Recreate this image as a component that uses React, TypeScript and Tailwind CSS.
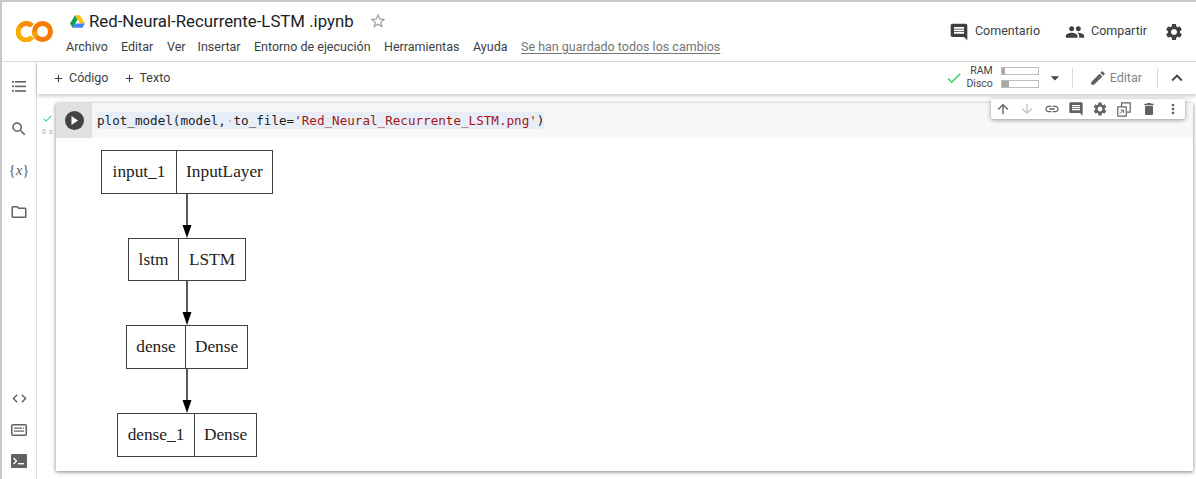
import React from "react";
import {
  MdComment, MdPeople, MdSettings, MdEdit, MdExpandLess, MdCheck, MdArrowUpward, MdArrowDownward,
  MdLink, MdDelete, MdMoreVert, MdSearch, MdCode, MdStarBorder, MdAdd, MdArrowDropDown, MdOutlineFolder,
} from "react-icons/md";

function ColabLogo() {
  return (
    <svg width="37" height="21" viewBox="0 0 37 21" fill="none" strokeWidth="5">
      <circle cx="26.5" cy="10.5" r="8" stroke="#F57C00" />
      <path d="M18.5 10.5 A8 8 0 0 0 20.8 16.2" stroke="#F9A000" />
      <path d="M16.2 16.2 A8 8 0 0 1 3.8 6.1" stroke="#F9AB00" />
      <path d="M3.8 6.1 A8 8 0 0 1 16.2 4.8" stroke="#F78C00" />
    </svg>
  );
}

function DriveLogo() {
  return (
    <svg width="15" height="13" viewBox="0 0 15 13">
      <path d="M5 0.2 H10 L15 8.6 H10 Z" fill="#FFC107" />
      <path d="M5 0.2 L7.5 4.4 L2.6 12.8 L0 8.6 Z" fill="#0F9D58" />
      <path d="M5 8.6 H15 L12.5 12.8 H2.6 Z" fill="#4285F4" />
    </svg>
  );
}

function ListIcon() {
  return (
    <svg width="14" height="11" viewBox="0 0 14 11" fill="#616161">
      <rect x="0" y="0" width="2" height="1.6" /><rect x="3" y="0" width="11" height="1.6" />
      <rect x="0" y="4.6" width="2" height="1.6" /><rect x="3" y="4.6" width="11" height="1.6" />
      <rect x="0" y="9.2" width="2" height="1.6" /><rect x="3" y="9.2" width="11" height="1.6" />
    </svg>
  );
}

function VarIcon() {
  return (
    <span className="text-[15px] text-[#616161] font-['Liberation_Serif',serif]">
      {"{"}<span className="italic">x</span>{"}"}
    </span>
  );
}

function SnippetIcon() {
  return (
    <svg width="16" height="12" viewBox="0 0 16 12" fill="none">
      <rect x="0.75" y="0.75" width="14.5" height="10.5" rx="1" stroke="#616161" strokeWidth="1.5" />
      <rect x="3" y="3.5" width="8" height="1.2" fill="#616161" />
      <rect x="12" y="3.5" width="1.2" height="1.2" fill="#616161" />
      <rect x="3" y="6.5" width="10" height="1.2" fill="#616161" />
    </svg>
  );
}

function TerminalIcon() {
  return (
    <svg width="16" height="14" viewBox="0 0 16 14">
      <rect width="16" height="14" rx="1" fill="#616161" />
      <path d="M2.5 4 L5.5 7 L2.5 10" stroke="#fff" strokeWidth="1.4" fill="none" />
      <rect x="7" y="9" width="6" height="1.4" fill="#fff" />
    </svg>
  );
}

function MirrorIcon() {
  return (
    <svg width="14" height="15" viewBox="0 0 14 15" fill="none" stroke="#616161" strokeWidth="1.2">
      <path d="M4.6 4.8 V0.8 H13.2 V10.2 H9.4" />
      <path d="M0.8 4.8 H9.2 V14.2 H0.8 Z" />
      <path d="M3 11.5 L6.2 8.3 M3.6 8 H6.4 V10.8" strokeWidth="1" />
    </svg>
  );
}

function GraphNode({ left, right, lw, rw }: { left: string; right: string; lw: number; rw: number }) {
  return (
    <div className="flex h-[43.67px] border border-[#404040] bg-white text-[17.3px] text-[#222] font-['Liberation_Serif',serif]">
      <div className="flex items-center justify-center border-r border-[#404040]" style={{ width: lw }}>{left}</div>
      <div className="flex items-center justify-center" style={{ width: rw }}>{right}</div>
    </div>
  );
}

function GraphArrow() {
  return (
    <svg width="12" height="44" viewBox="0 0 12 44" className="block">
      <line x1="6" y1="0" x2="6" y2="32" stroke="#303030" strokeWidth="1.6" />
      <path d="M1.5 31 H10.5 L6 44 Z" fill="#000" />
    </svg>
  );
}

const cellIconClass = "w-[24.3px] flex justify-center";

export default function App() {
  return (
    <div className="w-[1196px] h-[479px] overflow-hidden bg-white border-t-2 border-l-2 border-[#c8c8c8] font-['Roboto',sans-serif] text-[#3c4043] flex flex-col">
      {/* Header */}
      <header className="h-[60px] flex-none border-b border-[#dadce0] flex items-stretch">
        <div className="w-[64px] flex-none flex items-center pl-[14px]">
          <ColabLogo />
        </div>
        <div className="flex-1 flex flex-col pt-[7px]">
          <div className="flex items-center h-[24px]">
            <span className="ml-[4px]"><DriveLogo /></span>
            <span className="ml-[4px] text-[16.8px] text-[#202124] leading-[24px]">Red-Neural-Recurrente-LSTM .ipynb</span>
            <MdStarBorder className="ml-[15px] text-[#9e9e9e]" size={18} />
          </div>
          <nav className="flex items-center h-[20px] mt-[4px] text-[12.5px] text-[#3c4043]">
            <span className="w-[55px]">Archivo</span>
            <span className="w-[46px]">Editar</span>
            <span className="w-[30.5px]">Ver</span>
            <span className="w-[56.5px]">Insertar</span>
            <span className="w-[130px]">Entorno de ejecución</span>
            <span className="w-[89px]">Herramientas</span>
            <span className="w-[48px]">Ayuda</span>
            <span className="text-[#757575] underline underline-offset-2">Se han guardado todos los cambios</span>
          </nav>
        </div>
        <div className="flex items-center pr-[12px] text-[12.5px]">
          <MdComment size={20} className="text-[#3c4043]" />
          <span className="ml-[6px]">Comentario</span>
          <MdPeople size={20} className="ml-[25px] text-[#3c4043]" />
          <span className="ml-[6px]">Compartir</span>
          <MdSettings size={20} className="ml-[17px] text-[#3c4043]" />
        </div>
      </header>

      <div className="flex-1 flex min-h-0">
        {/* Sidebar */}
        <aside className="w-[35px] flex-none border-r border-[#dadce0] flex flex-col items-center justify-between pt-[19px] pb-[2px]">
          <div className="flex flex-col items-center">
            <div className="h-[39px]"><ListIcon /></div>
            <div className="h-[41px]"><MdSearch size={18} className="text-[#616161]" /></div>
            <div className="h-[42px] leading-[18px]"><VarIcon /></div>
            <div className="h-[14px]"><MdOutlineFolder size={18} className="text-[#616161]" /></div>
          </div>
          <div className="flex flex-col items-center">
            <div className="h-[31px] flex items-center"><MdCode size={17} className="text-[#616161]" /></div>
            <div className="h-[31px] flex items-center"><SnippetIcon /></div>
            <div className="h-[32px] flex items-center"><TerminalIcon /></div>
          </div>
        </aside>

        <main className="flex-1 flex flex-col min-w-0">
          {/* Toolbar */}
          <div className="h-[32px] flex-none bg-white shadow-[0_2px_4px_rgba(0,0,0,0.22)] flex items-center z-10 pl-[15px] pr-[8px] text-[12.5px]">
            <MdAdd size={13} />
            <span className="ml-[4px]">Código</span>
            <MdAdd size={13} className="ml-[14px]" />
            <span className="ml-[4px]">Texto</span>
            <div className="flex-1" />
            <MdCheck size={18} className="text-[#2fd16b]" />
            <div className="ml-[2px] -mt-[2px] w-[28px] flex flex-col items-end text-[10.5px] leading-[13px] text-[#444]">
              <span>RAM</span>
              <span>Disco</span>
            </div>
            <div className="ml-[8px] -mt-[2px] flex flex-col gap-[5px]">
              <div className="w-[38px] h-[8px] border border-[#bdbdbd]"><div className="w-[3px] h-full bg-[#a8a8a8]" /></div>
              <div className="w-[38px] h-[8px] border border-[#bdbdbd]"><div className="w-[7px] h-full bg-[#a8a8a8]" /></div>
            </div>
            <MdArrowDropDown size={20} className="ml-[6px] text-[#444]" />
            <div className="ml-[7px] w-px h-[20px] bg-[#dadce0]" />
            <MdEdit size={18} className="ml-[16px] text-[#616161]" />
            <span className="ml-[3px] text-[#80868b]">Editar</span>
            <div className="ml-[15px] w-px h-[20px] bg-[#dadce0]" />
            <MdExpandLess size={22} className="ml-[8px] text-[#444]" />
          </div>

          {/* Notebook */}
          <div className="flex-1 min-h-0 relative pl-[19px] pr-[3px] pt-[9px]">
            <div className="absolute left-[2px] top-[19px] w-[17px] flex flex-col items-center">
              <MdCheck size={11} className="text-[#2fd16b]" />
              <span className="text-[7px] leading-[8px] mt-[4px] text-[#a8a8a8] tracking-[0.5px]">0 s</span>
            </div>
            <div className="relative h-[368px] bg-white shadow-[0_1px_4px_rgba(0,0,0,0.5)]">
              <div className="h-[35px] bg-[#f7f7f7] flex">
                <div className="w-[36px] bg-[#e0e0e0] flex items-center justify-center">
                  <div className="w-[19px] h-[19px] rounded-full bg-[#424242] flex items-center justify-center">
                    <svg width="7" height="9" viewBox="0 0 7 9"><path d="M0.5 0 L7 4.5 L0.5 9 Z" fill="#fff" /></svg>
                  </div>
                </div>
                <div className="ml-[5px] mt-[9px] h-[17px] w-[447px] bg-[#e8eef7] rounded-[2px] font-['DejaVu_Sans_Mono',monospace] text-[12.6px] leading-[17px] text-[#212121] whitespace-pre">
                  plot_model(model,<span className="text-[#b0b8c4]">·</span>to_file=<span className="text-[#a31515]">'Red_Neural_Recurrente_LSTM.png'</span>)
                </div>
              </div>

              {/* Output diagram */}
              <div className="w-[172px] ml-[45px] mt-[12px] flex flex-col items-center">
                <GraphNode left="input_1" right="InputLayer" lw={75} rw={95} />
                <GraphArrow />
                <GraphNode left="lstm" right="LSTM" lw={50} rw={66} />
                <GraphArrow />
                <GraphNode left="dense" right="Dense" lw={59} rw={61} />
                <GraphArrow />
                <GraphNode left="dense_1" right="Dense" lw={77} rw={61} />
              </div>

              {/* Cell toolbar */}
              <div className="absolute top-[-4px] right-[8px] w-[194px] h-[20px] bg-white rounded-[2px] shadow-[0_1px_4px_rgba(0,0,0,0.4)] flex items-center text-[#616161]">
                <span className={cellIconClass}><MdArrowUpward size={16} /></span>
                <span className={cellIconClass}><MdArrowDownward size={16} className="text-[#c4c4c4]" /></span>
                <span className={cellIconClass}><MdLink size={16} /></span>
                <span className={cellIconClass}><MdComment size={16} /></span>
                <span className={cellIconClass}><MdSettings size={16} /></span>
                <span className={cellIconClass}><MirrorIcon /></span>
                <span className={cellIconClass}><MdDelete size={16} /></span>
                <span className={cellIconClass}><MdMoreVert size={16} /></span>
              </div>
            </div>
          </div>
        </main>
      </div>
    </div>
  );
}
